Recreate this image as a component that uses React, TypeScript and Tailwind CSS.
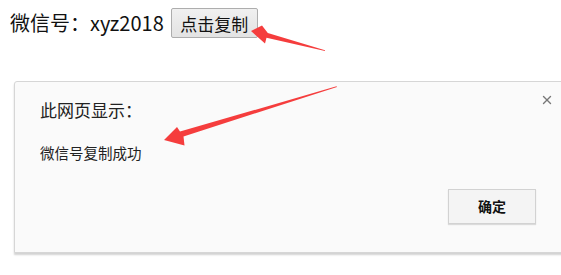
import { X } from "lucide-react"

const cjk = "font-['Microsoft_YaHei','Noto_Sans_CJK_SC',sans-serif]"

function Arrows() {
  return (
    <svg className="pointer-events-none absolute left-0 top-0" width="561" height="275" viewBox="0 0 561 275">
      {/* arrow to the copy button */}
      <polygon
        points="325,51 266.5,37.8 265,43.5 251,31 262,25.5 267.8,33 325,50.2"
        fill="#f53d3d"
      />
      {/* arrow to the dialog message */}
      <polygon
        points="337,87 183.5,136.5 184.5,145.5 164,140 177,127 180,131.5 336.5,86.3"
        fill="#f53d3d"
      />
    </svg>
  )
}

export default function App() {
  return (
    <div className={`relative h-[275px] w-[561px] overflow-hidden bg-white ${cjk}`}>
      <div className="flex items-center pl-[10px] pt-[8px]">
        <span className="text-[20px] leading-[30px] text-[#111]">微信号：xyz2018</span>
        <button className="ml-[7px] h-[30px] w-[87px] rounded-[2px] border border-[#adadad] bg-gradient-to-b from-[#f0f0f0] to-[#e3e3e3] text-[17px] leading-none text-[#111]">
          点击复制
        </button>
      </div>

      <div className="ml-[14px] mt-[43px] h-[172px] w-[570px] rounded-tl-[3px] border border-[#d6d6d6] bg-[#fafafa] shadow-[0_2px_2px_rgba(0,0,0,0.18)]">
        <div className="flex justify-between pl-[25px] pr-[29px] pt-[11px]">
          <div className="pt-[5px] text-[17px] leading-[24px] text-[#222]">此网页显示：</div>
          <X className="h-[14px] w-[14px] text-[#777]" strokeWidth={2.4} />
        </div>
        <div className="mt-[21px] pl-[25px] text-[14.5px] leading-[20px] text-[#222]">微信号复制成功</div>
        <div className="mt-[26px] flex justify-end pr-[47px]">
          <button className="h-[35px] w-[88px] border border-[#d2d2d2] bg-[#f4f4f4] text-[14px] font-bold text-[#111] shadow-[0_1px_1px_rgba(0,0,0,0.12)]">
            确定
          </button>
        </div>
      </div>

      <Arrows />
    </div>
  )
}
